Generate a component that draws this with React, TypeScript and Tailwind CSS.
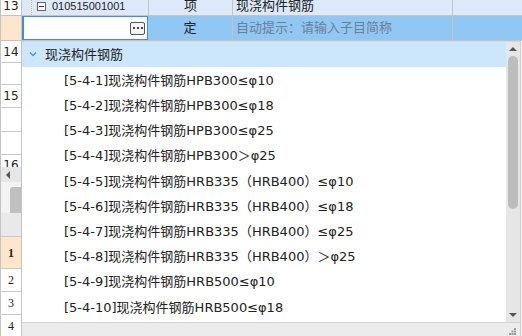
import React from 'react';

const items = [
  '[5-4-1]现浇构件钢筋HPB300≤φ10',
  '[5-4-2]现浇构件钢筋HPB300≤φ18',
  '[5-4-3]现浇构件钢筋HPB300≤φ25',
  '[5-4-4]现浇构件钢筋HPB300＞φ25',
  '[5-4-5]现浇构件钢筋HRB335（HRB400）≤φ10',
  '[5-4-6]现浇构件钢筋HRB335（HRB400）≤φ18',
  '[5-4-7]现浇构件钢筋HRB335（HRB400）≤φ25',
  '[5-4-8]现浇构件钢筋HRB335（HRB400）＞φ25',
  '[5-4-9]现浇构件钢筋HRB500≤φ10',
  '[5-4-10]现浇构件钢筋HRB500≤φ18',
];

const cjk = { fontFamily: '"DejaVu Sans", "Noto Sans CJK SC", sans-serif' };

function NumCell({ h, label, cls = '' }: { h: string; label?: string; cls?: string }) {
  return (
    <div className={`${h} flex items-center justify-center border-b border-[#c9c9c9] text-[12px] text-[#222] ${cls}`}>
      {label}
    </div>
  );
}

export default function App() {
  return (
    <div className="relative h-[336px] w-[522px] overflow-hidden bg-white" style={cjk}>
      {/* row 13 */}
      <div className="flex h-[16px] border-b border-[#c4c4c4] bg-[#dde9fb]">
        <div className="flex w-[22px] items-center justify-center border-x border-[#c4c4c4] bg-white pb-[3px] text-[12px] text-[#222]">
          13
        </div>
        <div className="relative flex w-[126px] items-center pb-[3px]">
          <div className="absolute left-[9px] top-0 h-full border-l border-dotted border-[#f0b060]" />
          <div className="ml-[15px] flex h-[9px] w-[9px] items-center justify-center border border-[#666] bg-white">
            <div className="h-px w-[5px] bg-[#333]" />
          </div>
          <span className="ml-[6px] text-[11px] text-[#222]" style={{ fontFamily: '"Liberation Sans", sans-serif' }}>
            010515001001
          </span>
        </div>
        <div className="flex w-[84px] items-center justify-center border-l border-[#c4c4c4] pb-[3px] text-[13px] text-[#222]">
          项
        </div>
        <div className="flex w-[220px] items-center border-l border-[#c4c4c4] pb-[3px] pl-[3px] text-[13px] text-[#222]">
          现浇构件钢筋
        </div>
        <div className="flex-1 border-l border-[#c4c4c4]" />
      </div>

      {/* editing row */}
      <div className="flex h-[25px] border-b border-[#c4c4c4] bg-[#90c7f4]">
        <div className="w-[22px] border-x border-[#c4c4c4] bg-[#fde6cc]" />
        <div className="flex w-[126px] items-center justify-end border border-l-2 border-[#3d8ee8] bg-white pr-[2px]">
          <div className="flex h-[13px] w-[15px] items-center justify-center gap-[2px] rounded-[2px] border border-[#555] bg-[#f4f4f4]">
            <span className="h-[2px] w-[2px] bg-[#444]" />
            <span className="h-[2px] w-[2px] bg-[#444]" />
            <span className="h-[2px] w-[2px] bg-[#444]" />
          </div>
        </div>
        <div className="flex w-[84px] items-center justify-center text-[13px] text-[#222]">定</div>
        <div className="flex w-[220px] items-center border-l border-[#c4c4c4] pl-[3px] text-[13px] text-[#6c8094]">
          自动提示：请输入子目简称
        </div>
        <div className="flex-1 border-l border-[#c4c4c4]" />
      </div>

      <div className="flex h-[295px]">
        {/* left row numbers */}
        <div className="flex w-[22px] flex-col border-x border-[#c4c4c4] bg-white">
          <NumCell h="h-[22px]" label="14" />
          <NumCell h="h-[22px]" />
          <NumCell h="h-[23px]" label="15" />
          <NumCell h="h-[24px]" />
          <NumCell h="h-[23px]" />
          <div className="h-[12px] overflow-hidden text-center text-[12px] leading-[20px] text-[#222]">16</div>
          <div className="flex h-[15px] items-center bg-[#e6e6e6] pl-[5px]">
            <div className="h-0 w-0 border-y-[4px] border-r-[4px] border-y-transparent border-r-[#555]" />
          </div>
          <div className="flex h-[31px] items-end justify-end bg-[#f3f3f3]">
            <div className="h-[26px] w-[11px] rounded-tl-[3px] bg-[#c0c0c0]" />
          </div>
          <div className="h-[24px] border-b border-[#c9c9c9] bg-[#e9e9e9]" />
          <NumCell h="h-[32px]" label="1" cls="bg-[#fde6cc] font-bold [font-family:'Liberation_Serif',serif]" />
          <NumCell h="h-[23px]" label="2" cls="[font-family:'Liberation_Serif',serif]" />
          <NumCell h="h-[23px]" label="3" cls="[font-family:'Liberation_Serif',serif]" />
          <NumCell h="h-[21px]" label="4" cls="border-b-0 [font-family:'Liberation_Serif',serif]" />
        </div>

        {/* popup */}
        <div className="flex w-[498px] flex-col border-t border-[#d6d6d6] bg-white">
          <div className="flex flex-1">
            <div className="flex flex-1 flex-col">
              <div className="flex h-[25px] items-center bg-[#cce6fb] pl-[7px]">
                <svg width="8" height="6" viewBox="0 0 8 6" className="mb-[2px]">
                  <polyline points="1,1.5 4,4.5 7,1.5" fill="none" stroke="#4a90d9" strokeWidth="1.3" />
                </svg>
                <span className="ml-[8px] text-[13px] text-[#222]">现浇构件钢筋</span>
              </div>
              <div className="flex flex-col pt-[1px]">
                {items.map((t) => (
                  <div key={t} className="flex h-[25.2px] items-center pl-[42px] text-[13px] text-[#222]">
                    {t}
                  </div>
                ))}
              </div>
            </div>
            {/* vertical scrollbar */}
            <div className="flex w-[14px] flex-col items-center bg-[#e6e6e6] pt-[5px]">
              <div className="h-0 w-0 border-x-[4px] border-b-[4px] border-x-transparent border-b-[#555]" />
              <div className="mt-[5px] h-[153px] w-[10px] rounded-[5px] bg-[#bdbdbd]" />
              <div className="flex-1" />
              <div className="mb-[5px] h-0 w-0 border-x-[4px] border-t-[4px] border-x-transparent border-t-[#555]" />
            </div>
          </div>
          {/* status bar */}
          <div className="flex h-[14px] items-end justify-end border-t border-[#d2d2d2] bg-[#ececec] pb-[1px] pr-[4px]">
            <svg width="7" height="7" viewBox="0 0 7 7">
              <rect x="5" y="0" width="2" height="2" fill="#999" />
              <rect x="2.5" y="2.5" width="2" height="2" fill="#999" />
              <rect x="5" y="2.5" width="2" height="2" fill="#999" />
              <rect x="0" y="5" width="2" height="2" fill="#999" />
              <rect x="2.5" y="5" width="2" height="2" fill="#999" />
              <rect x="5" y="5" width="2" height="2" fill="#999" />
            </svg>
          </div>
        </div>

        {/* strip of grid behind, right edge */}
        <div className="flex-1 border-l border-[#d0d0d0] bg-[#f6f6f6]" />
      </div>
    </div>
  );
}
